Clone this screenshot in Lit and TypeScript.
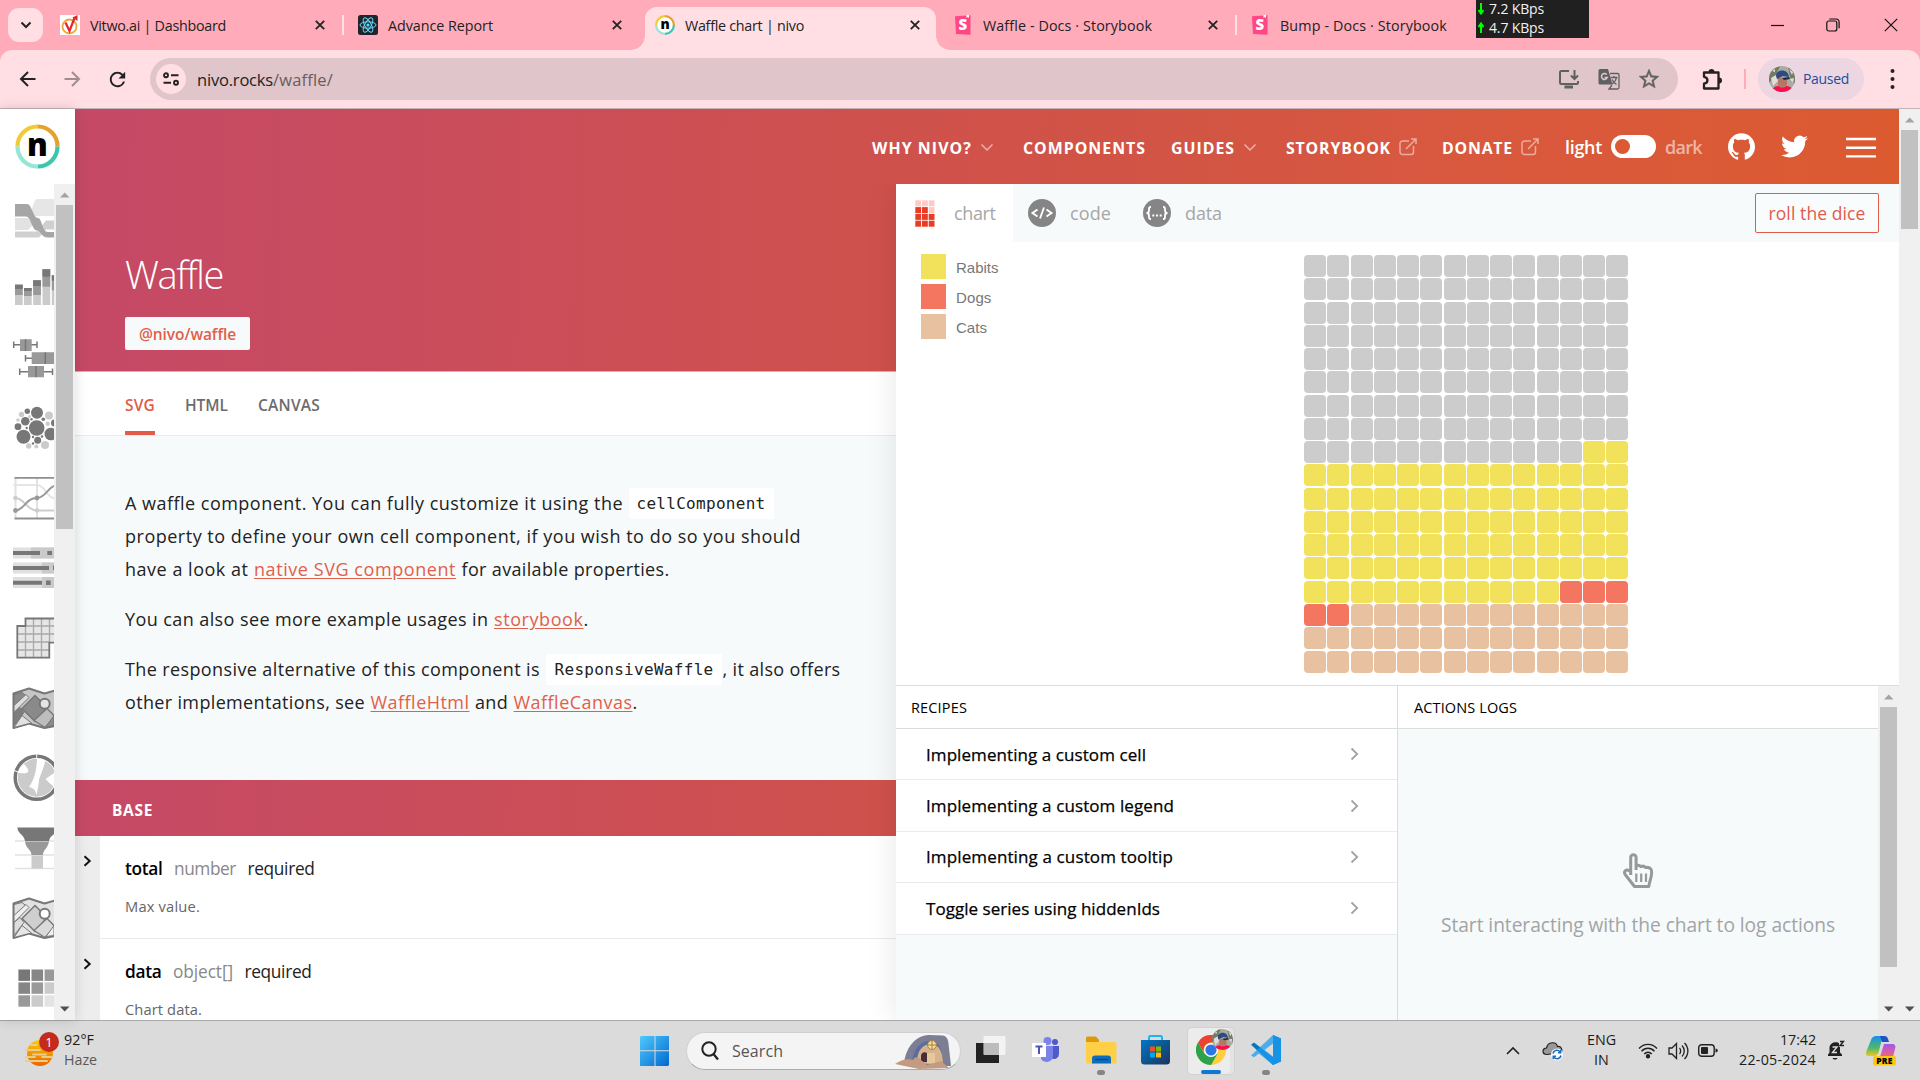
import { LitElement, html, svg, css } from "lit";
import { customElement, property } from "lit/decorators.js";

/** Text run that is tracked to occupy an exact advance width. */
@customElement("fit-text")
class FitText extends LitElement {
  @property({ type: Number }) w = 0;
  static styles = css`:host{display:inline-block;white-space:nowrap;flex:none}`;
  render() { return html`<slot></slot>`; }
  firstUpdated() {
    const n = (this.textContent || "").length;
    const natural = this.getBoundingClientRect().width;
    if (this.w && n) {
      this.style.letterSpacing = `${(this.w - natural) / n}px`;
      this.style.width = `${this.w}px`;
    }
  }
}

const ft = (text: string, w: number, cls = "") => html`<fit-text class=${cls} .w=${w}>${text}</fit-text>`;

/** Classic scrollbar with arrows. */
@customElement("scroll-bar")
class ScrollBar extends LitElement {
  @property({ type: Number }) thumb = 100;
  static styles = css`
    :host{display:flex;flex-direction:column;align-items:center;width:21px;flex:none;background:#f0f0f0}
    .t{width:17px;background:#c1c1c1}
    .sp{flex:1}
    svg{display:block;flex:none}
  `;
  render() {
    return html`
      <svg width="21" height="21"><path d="M6 13.5h9.5L10.7 8.5z" fill="#a3a3a3"/></svg>
      <div class="t" style="height:${this.thumb}px"></div><div class="sp"></div>
      <svg width="21" height="21"><path d="M6 7.5h9.5l-4.8 5z" fill="#505050"/></svg>`;
  }
}

const closeX = html`<svg class="x" width="12" height="12" viewBox="0 0 12 12"><path d="M1.8 1.8l8.4 8.4M10.2 1.8l-8.4 8.4" stroke="#222" stroke-width="1.8"/></svg>`;

const nivoRing = (s: number, w: number) => html`<svg width=${s} height=${s} viewBox="0 0 45 45">
  <circle cx="22.5" cy="22.5" r="20" fill="#fff"/>
  <g fill="none" stroke-width=${w}>
    <path d="M2.5 22.5a20 20 0 0 1 20-20" stroke="#f0cb35"/><path d="M22.5 2.5a20 20 0 0 1 20 20" stroke="#e6a12c"/>
    <path d="M42.500 22.5a20 20 0 0 1-20 20" stroke="#3cc7ac"/><path d="M22.500 42.5a20 20 0 0 1-20-20" stroke="#97e5d6"/>
  </g>
  <text x="22.500" y="31.500" text-anchor="middle" font-family="Open Sans, sans-serif" font-weight="800" font-size="31">n</text></svg>`;

const storybook = html`<svg width="20" height="20" viewBox="0 0 20 20"><path d="M2 1.200L17.500.2v19.500L3 19z" fill="#ff4785"/><path d="M13.500 0l2.500 0v3l-1.200-.9-1.300 1z" fill="#fff"/><text x="9.900" y="15.300" text-anchor="middle" font-family="Open Sans, sans-serif" font-weight="800" font-size="15" fill="#fff">S</text></svg>`;

const avatar = (s: number) => html`<svg width=${s} height=${s} viewBox="0 0 26 26"><defs><clipPath id="av"><circle cx="13" cy="13" r="13"/></clipPath></defs>
  <g clip-path="url(#av)"><rect width="26" height="26" fill="#a9aaa2"/><path d="M0 4l6-4h5L7 9l-7 8zM19 0l7 7v12l-5-8z" fill="#6f7d63"/><path d="M2 12l5-3 2 6-5 5zM20 3l4 3-1 3zM3 5l3-2v3zM21 13l4-1-1 5z" fill="#e2dcd8"/>
  <path d="M9 12h9v7l-4 3-5-3z" fill="#b47763"/><path d="M7 10c0-7 12-8 13 1l-6-1-6 3z" fill="#2c4b82"/><path d="M13 12l7-1 1 2-6 1z" fill="#202a44"/><path d="M3 26c0-5 4-6 7-6 2 2 5 2 7 0 4 0 7 2 7 6z" fill="#fa0f4b"/></g></svg>`;

const down = html`<svg width="14" height="9" viewBox="0 0 14 9"><path d="M1.500 1.500L7 7l5.500-5.500" fill="none" stroke="#fff" stroke-opacity=".55" stroke-width="1.500"/></svg>`;
const ext = html`<svg width="18" height="18" viewBox="0 0 18 18"><path d="M10 3H3.500A2.500 2.500 0 0 0 1 5.500V14a2.500 2.500 0 0 0 2.500 2.500H12a2.500 2.500 0 0 0 2.500-2.500V8M12 1h5v5M17 1L7 11" fill="none" stroke="#fff" stroke-opacity=".5" stroke-width="1.500"/></svg>`;
const next = html`<svg width="9" height="14" viewBox="0 0 9 14"><path d="M1.500 1.500L7.200 7l-5.700 5.500" fill="none" stroke="#a3a3a3" stroke-width="1.800"/></svg>`;
const expand = html`<svg width="9" height="12" viewBox="0 0 9 12"><path d="M1.500 1.200L6.700 6l-5.200 4.800" fill="none" stroke="#111" stroke-width="2"/></svg>`;

const mapBase = (y: number, dark: boolean) => svg`<g transform="translate(0 ${y})" stroke="#777" stroke-linejoin="round">
  <path d="M13.500 5L29 0l15.500 5L60 .5v36L44.500 39.500 29 35l-15.500 4.500z" fill=${dark ? "#c6c6c6" : "#e2e2e2"} stroke-width="2"/>
  <path d="M22 20L35 7l12 12-12 14z" fill=${dark ? "#8a8a8a" : "#cfcfcf"} stroke-width="1.500"/>
  <path d="M14 6l8-2 6 5-14 14z" fill=${dark ? "#8a8a8a" : "#dedede"} stroke-width="1"/>
  <path d="M14 17L26 6l3 3-15 15z" fill=${dark ? "#ddd" : "#eee"} stroke-width="1"/>
  <path d="M14 39l8-12 10 8-3 0z" fill=${dark ? "#e2e2e2" : "#e6e6e6"} stroke-width="1"/>
  <path d="M14 24l6-5 4 5-10 13z" fill=${dark ? "#7d7d7d" : "#ddd"} stroke-width="1"/>
  <path d="M34 32l13-12 8 8-10 11z" fill=${dark ? "#bdbdbd" : "#dadada"} stroke-width="1.300"/>
  <path d="M46 38l8-11v10z" fill=${dark ? "#8a8a8a" : "#eee"} stroke-width="1"/>
  <circle cx="44.700" cy="15.200" r="5" fill=${dark ? "#e5e5e5" : "#fff"} stroke-width="2"/></g>`;

const bar = (x: number, a: number, b: number, c: number) => svg`<rect x=${x} y=${a} width="7.700" height=${305 - a} fill="#cbcbcb"/><rect x=${x} y=${a} width="7.700" height=${c - a} fill="#999"/><rect x=${x} y=${a} width="7.700" height=${b - a} fill="#777"/>`;
const dots = (list: number[][], f: string) => list.map(([x, y, r]) => svg`<circle cx=${x} cy=${y} r=${r} fill=${f}/>`);

const chartIcons = [
  svg`<path d="M28 216c4-1 5-17 9-17h20v17z" fill="#e6e6e6"/><path d="M15 218h13l6 6-6 6H15z" fill="#e2e2e2"/><path d="M15 231.500h22l9-11h10v9H46l-7 8H15z" fill="#d0d0d0"/><path d="M15 204h12c5 0 6 14 11 14 4 0 4 14 10 14h8v5.500h-8c-7 0-7-7-11-7-5 0-6-14-11-14H15z" fill="#a6a6a6"/>`,
  svg`${bar(15, 284.7, 289, 295)}${bar(24, 288, 291, 296)}${bar(33.2, 280.3, 286, 295)}${bar(42.5, 269.3, 276.7, 286.7)}${bar(51.8, 275.3, 280.7, 290.3)}`,
  svg`<g stroke="#777" stroke-width="1.500" fill="#999"><path d="M13.500 344.700H37M13.700 341.500v6.500M37 341.500v6.500M25.500 358.300H40M25.500 355v6.500M19.700 371.700h33M19.700 368.500v6.500M52.500 368.500v6.500"/></g><path d="M20 339.300h11.700v11.700H20zM31.700 352.300H54V364H31.700zM28 366h16v11.300H28z" fill="#999"/><path d="M25.500 339.300V351M45.300 352.300V364M36 366v11.300" stroke="#777" stroke-width="1.500"/>`,
  svg`${dots([[49, 415.500, 4], [45, 445, 4], [21.500, 414.500, 2.700], [28.700, 446, 2.700], [36.300, 446.500, 2], [47.700, 423.700, 2.200], [18, 420, 1.800], [29.500, 416.500, 1.500]], "#cbcbcb")}${dots([[36.700, 428, 7.800], [37, 412.700, 6], [23.500, 436.700, 7], [50.800, 434, 6.300], [25.300, 421.300, 4.300], [18, 426.700, 3.400], [27.300, 411.300, 2.700], [37.700, 440.300, 3.500], [54.500, 423, 3.500], [43.300, 419.300, 1.800], [31.500, 419.300, 1.200], [26.700, 428, 1.200], [33, 437, 1.200], [42, 436.500, 1.200], [33, 443.500, 1.200]], "#777")}`,
  svg`<g fill="none" stroke-width="2"><path d="M15.500 478v40M37 478v40" stroke="#e2e2e2"/><path d="M13.500 485H37c8 0 9 12 17 13" stroke="#e5e5e5"/><path d="M13.500 498h2c9 0 11 12.500 21.500 12.500h17" stroke="#cdcdcd"/><path d="M15 510.500c10 0 10-12.500 22-12.500 8 0 10-9 17-12" stroke="#999"/><path d="M14.500 477.800H54M14.500 518.500H54" stroke="#8f8f8f" stroke-width="1.800"/></g>${dots([[15.500, 510.500, 2.400], [37, 498, 2.400]], "#999")}${dots([[15.500, 498, 2.200], [37, 510.500, 2.200]], "#cdcdcd")}`,
  svg`<path d="M13 547.500h41v11H13zM13 562.500h41v11H13zM13 577h41v11H13z" fill="#e0e0e0"/><path d="M31 547.500h23v11H31zM42 562.500h12v11H42zM42 577h12v11H42z" fill="#cacaca"/><path d="M13 551h27v4H13zM47.300 551h4.700v4h-4.700zM13 566h36v4H13zM13 580.700h29v4H13zM46 580.500h4.700v4.500H46zM53 565.500h2v4.500h-2z" fill="#777"/>`,
  svg`<path d="M25.500 618.500H60v24H49.300v15.200h-32V626h8.200z" fill="#e6e6e6"/><path d="M25.500 626v31M33.500 619v38M41.500 619v38M49.500 619v24M26 626h28M18 634h36M18 642h31M18 650h31" stroke="#a8a8a8" stroke-width="1.300"/><path d="M60 618.500H25.500v7.500h-8.200v31.700h32v-15H60" fill="none" stroke="#777" stroke-width="1.800"/>`,
  mapBase(688.5, true),
  svg`<circle cx="36.700" cy="777.700" r="19" fill="#cbcbcb"/><path d="M37 757l8.500 1.500c-1.500 11-6 17-6.500 22.500-1 7-1.500 9-2.500 14-1-5-3-7-7.500-8 6-8 8-20 8-30zM17 771l7-7c6 7 8 11-9 8.500zM45.500 779l8.500-6v14c-3-3-5-4-8.500-8z" fill="#fff"/><circle cx="36.700" cy="777.700" r="21.500" fill="none" stroke="#777" stroke-width="3.500"/><path d="M36.700 754v5M13 770l5 2" stroke="#fff"/>`,
  svg`<path d="M15 841h40M15 855h40M15 868.500h40" stroke="#e2e2e2" stroke-width="1.500"/><path d="M17.300 827.500H58c-1 7-8 7-9 13.500H25c-1-6.500-7-7-7.700-13.500z" fill="#777"/><path d="M25 841.500h24c-1 7-6 8-6 13.500H31.500c0-5.500-6-6.500-6.500-13.500z" fill="#999"/><path d="M31.500 855.500H43v13H31.500z" fill="#cbcbcb"/>`,
  mapBase(898.5, false),
  svg`${["#777", "#868686", "#999", "#868686", "#999", "#cbcbcb", "#999", "#cbcbcb", "#e3e3e3"].map((f, i) => svg`<rect x=${18.400 + (i % 3) * 13.100} y=${969.500 + Math.floor(i / 3) * 12.900} width="11.600" height="11.400" fill=${f}/>`)}`,
];

const waffle = Array.from({ length: 252 }, (_, i) => (i < 124 ? "e" : i < 207 ? "y" : i < 212 ? "r" : "c"));

@customElement("app-root")
class AppRoot extends LitElement {
  static styles = css`
    :host{display:flex;flex-direction:column;width:1920px;height:1080px;overflow:hidden;position:relative;font-family:"Open Sans","Noto Sans",sans-serif;background:#ffabba;color:#222}
    *{box-sizing:border-box}
    svg{display:block;flex:none}
    /* browser tabs */
    .strip{height:50px;flex:none;display:flex;padding-left:8px;font-size:14.300px}
    .search-tabs{width:35px;height:34px;margin-top:8px;margin-right:5px;border-radius:11px;background:#ffdee4;display:grid;place-items:center}
    .tab{height:50px;display:flex;align-items:center;gap:10px;position:relative}
    .tab svg:first-child{width:20px}
    .x{margin-left:auto}
    .t1{width:296px;padding:0 18px 0 12px}
    .t2{width:301px;padding:0 22px 0 14px}
    .t3{width:291px;height:43px;margin-top:7px;padding:0 15px 7px 10px;background:#ffdee4;border-radius:12px 12px 0 0}
    .t3::before,.t3::after{content:"";position:absolute;bottom:0;width:14px;height:14px}
    .t3::before{left:-14px;background:radial-gradient(circle at 0 0,transparent 13.5px,#ffdee4 14px)}
    .t3::after{right:-14px;background:radial-gradient(circle at 100% 0,transparent 13.5px,#ffdee4 14px)}
    .t4{width:301px;padding:0 18px 0 17px}
    .t5{width:239px;padding:0 0 0 13px}
    .sep::before{content:"";position:absolute;right:0;top:15px;width:2px;height:20px;background:#ffdee4}
    .win{margin-left:auto;padding-right:22px;display:flex;align-items:center}
    .win svg:nth-child(2){margin:0 44px 0 41px}
    .net{position:absolute;left:1476px;top:0;width:113px;height:38px;background:#202020;color:#f2f2f2;font-size:14px;line-height:19px}
    .net div{display:flex;align-items:center;gap:5px;padding-left:2px;height:19px;margin-top:-1px}
    .net div+div{margin-top:0}
    /* toolbar */
    .bar{height:59px;flex:none;background:#ffdee4;border-radius:12px 12px 0 0;border-bottom:1px solid #c3b3b7;display:flex;align-items:center;padding-left:18px}
    .bar svg.fw{margin:0 24px 0 24px}
    .omni{margin-left:21px;width:1528px;height:42px;border-radius:21px;background:#e0c5cb;display:flex;align-items:center;padding:0 18px 0 6px;font-size:16.500px}
    .info{width:30px;height:30px;border-radius:50%;background:#ffdee4;display:grid;place-items:center;margin-right:11px}
    .path{color:#6a5c60}
    .omni .ic{margin-left:auto;display:flex;gap:18px;align-items:center}
    .puz{margin-left:23px}
    .vs{width:2px;height:20px;background:#ffabba;margin:0 12px 0 20px}
    .paused{width:106px;height:42px;border-radius:21px;background:#ecd6e2;display:flex;align-items:center;gap:8px;padding:0 0 1px 11px;color:#1f4d9c;font-size:14px;font-weight:500}
    .dots{margin-left:26px}
    /* page */
    .page{height:911px;flex:none;display:flex;background:#fff}
    .side{width:75px;flex:none;display:flex;flex-direction:column;background:#fff;box-shadow:0 0 12px rgba(0,0,0,.15);z-index:2}
    .logo{height:75px;padding:15px 0 0 15px;flex:none}
    .sidebody{flex:1;display:flex;min-height:0}
    .icons{width:54px;overflow:hidden}
    .main{width:1824px;flex:none;display:grid;grid-template-columns:821px 1003px;grid-template-rows:75px 836px}
    .grad{background:linear-gradient(91deg,#c54966 75px,#ca4d5a 500px,#cd4f52 720px,#cf514c 900px,#d35542 1250px,#d85840 1420px,#dc5a30 1899px) fixed}
    .nav{grid-column:1/3;display:flex;align-items:center;padding:3px 0 0 797px;color:#fff;font-weight:700;font-size:15.900px}
    .nav>*{flex:none}
    .nav .d{margin-left:25px}
    .nav .s0{margin-left:29px}
    .nav .s1{margin-left:29px}
    .nav .e{margin:-2px 0 0 8px}
    .nav .l{margin-left:26px;font-size:18px;font-weight:600;margin-top:-3px}
    .tog{width:45px;height:23px;border-radius:12px;background:#fff;margin:-3px 9px 0 9px;padding:4px}
    .tog i{display:block;width:15px;height:15px;border-radius:50%;background:#db5a32}
    .nav .dk{font-size:18px;font-weight:600;opacity:.55;margin-top:-3px}
    .nav .gh{margin:-3px 0 0 26px}.nav .tw{margin:-3px 0 0 26px}.nav .hb{margin:-2px 0 0 38px}
    .left{display:flex;flex-direction:column;min-height:0;overflow:hidden}
    .hero{height:188px;flex:none;padding:63px 0 0 50px;border-bottom:1px solid #eba5a4}
    h1{margin:0;font-weight:300;font-size:38px;line-height:54px;height:54px;color:#fff}
    .pkg{width:125px;height:33px;border-radius:2px;background:#f6fafb;color:#e25f49;font-weight:600;font-size:15.500px;display:grid;place-items:center;margin-top:16px}
    .kinds{height:64px;flex:none;display:flex;gap:30px;padding-left:50px;border-bottom:1px solid #e8eced;font-size:15.500px;font-weight:600;color:#6c6c6c;line-height:67px}
    .kinds .on{color:#e25b49;border-bottom:4px solid #e25b49;height:63px}
    .desc{height:344px;flex:none;background:#f6fafb;padding:51px 0 0 50px;font-size:18px;color:#222}
    .ln{height:32.700px;display:flex;align-items:center;gap:5.500px}
    .tall{height:33px}
    .gapb{margin-bottom:18px}
    .gapb+.tall{margin-top:-1px}
    .u{color:#e25f49;text-decoration:underline;text-underline-offset:2px}
    .code{font-family:"DejaVu Sans Mono",monospace;font-size:16px;background:#fff;border-radius:2px;padding:1px 8px 0;height:31px;display:flex;align-items:center}
    .tall .code{margin-right:1px;padding-left:9px}
    .nog{margin-left:-5.500px}
    .base{height:56px;flex:none;color:#fff;font-weight:700;font-size:15.500px;display:flex;align-items:center;padding:3px 0 0 37px}
    .prop{height:103px;flex:none;display:flex;background:#fff}
    .gut{width:25px;background:#ededed;padding:19px 0 0 8px}
    .pb{flex:1;padding:20px 0 0 25px;border-bottom:1px solid #e9eced;font-size:17.300px;color:#222}
    .p1{display:flex;height:24px;align-items:center;gap:11.500px}
    .p1 b{font-weight:600;color:#000}.p1 .ty{color:#888}
    .p2{margin-top:14px;height:24px;display:flex;align-items:center;font-size:14.700px;color:#666}
    .right{display:flex;flex-direction:column;background:#fff;box-shadow:0 0 30px rgba(0,0,0,.1);clip-path:inset(0 0 0 -40px);min-height:0}
    .ctabs{height:58px;flex:none;background:#f6fafb;display:flex;font-size:18px;color:#a6a6a6}
    .ct{display:flex;align-items:center}
    .c-a{width:117px;background:#fff;padding-left:19px;gap:19px}
    .c-b{padding-left:15px;gap:14px;width:115px}
    .c-c{padding-left:15px;gap:14px}
    .roll{margin:9px 20px 0 auto;width:124px;height:40px;border:1px solid #e25b49;border-radius:2px;color:#e25b49;display:grid;place-items:center;font-size:17.500px;background:#f9fcfc;font-weight:500}
    .chart{height:443px;flex:none;display:flex;padding:12px 0 0 25px}
    .leg{width:383px;display:flex;flex-direction:column;gap:4.500px;font-family:"Liberation Sans",sans-serif;font-size:15px;color:#777}
    .leg div{display:flex;align-items:center;gap:10px;height:25.500px}
    .leg i{width:25px;height:25px}
    .leg fit-text{margin-top:1.500px}
    .wf{display:grid;grid-template-columns:repeat(14,22px);grid-auto-rows:22px;gap:1.280px;padding-top:1px}
    .wf i{border-radius:4px}
    .wf .e{background:#ccc}.y{background:#f1e15b}.r{background:#f47560}.c{background:#e8c1a0}
    .low{flex:1;display:flex;border-top:1px solid #dcdcdc;background:#f6fafb;min-height:0}
    .rec{width:502px;border-right:1px solid #dcdcdc}
    .act{flex:1;display:flex;flex-direction:column}
    .hd{height:43px;flex:none;background:#fff;border-bottom:1px solid #dcdcdc;display:flex;align-items:center;padding-left:15px;font-size:14.500px;font-weight:500;color:#000}
    .act .hd{padding-left:16px}
    .ri{height:51.400px;background:#fff;border-bottom:1px solid #ebebeb;display:flex;align-items:center;justify-content:space-between;padding:0 38px 0 30px;font-size:17px;font-weight:500;-webkit-text-stroke:.25px #000;color:#000}
    .empty{flex:1;display:flex;flex-direction:column;align-items:center;padding:124px 0 0 0;gap:22px;font-size:19.200px;color:#a2a4a4}
    /* taskbar */
    .task{height:60px;flex:none;background:#dbdbdb;border-top:1px solid #a9a9a9;display:grid;grid-template-columns:64px 576px 46px 290px 56px 54px 55px 46px 64px 255px 36px 45px 51px 30px 30px 39px 79px 11px 39px 40px;align-items:center;font-size:14.300px;color:#1c1c1c}
    .wx{padding:0 0 2px 25px}
    .two{line-height:20px;padding-bottom:2px}
    .two div{height:20px}
    .mut{color:#5a5a5a}
    .find{width:275px;height:38px;border-radius:19px;background:#f4f4f4;border:1px solid #cfcfcf;border-bottom-color:#aaa;display:flex;align-items:center;padding-left:14px;font-size:16px;color:#555;overflow:hidden}
    .find fit-text{margin-left:13px}
    .find .art{margin:0 8px 0 auto}
    .app{position:relative;width:34px;height:59px;display:grid;align-items:center}
    .app svg,.cr>svg{margin-top:-1px}
    .run::after{content:"";position:absolute;left:11px;top:49px;width:8px;height:5px;border-radius:3px;background:#858585}
    .cr{width:48px;height:48px;background:#ececec;border:1px solid #d2d2d2;border-radius:5px;box-shadow:inset -4px 0 0 #e3e3e3;position:relative;padding:8px 0 0 8px}
    .cr .av{position:absolute;left:24px;top:1px}
    .cr::after{content:"";position:absolute;left:13px;bottom:0;width:20px;height:4px;border-radius:2px;background:#0f78d4}
    .ctr{display:flex;flex-direction:column;align-items:center;width:29px}
    .rt{display:flex;flex-direction:column;align-items:flex-end}
  `;

  private strip() {
    return html`<div class="strip">
      <div class="search-tabs"><svg width="12" height="8" viewBox="0 0 12 8"><path d="M1.500 1.500L6 6l4.500-4.500" fill="none" stroke="#222" stroke-width="2"/></svg></div>
      <div class="tab t1 sep"><svg width="20" height="20" viewBox="0 0 20 20"><rect width="20" height="20" fill="#fff"/><circle cx="9.500" cy="11.500" r="7" fill="none" stroke="#f0a63c" stroke-width="1.800"/><path d="M5.500 7.500L9.500 16 14.500 3" fill="none" stroke="#e3262c" stroke-width="2.200"/><path d="M12.300 2.500L17.500 0v6z" fill="#e3262c"/></svg>${ft("Vitwo.ai | Dashboard", 136)}${closeX}</div>
      <div class="tab t2"><svg width="20" height="20" viewBox="0 0 20 20"><rect width="20" height="20" rx="2.500" fill="#20232a"/><g fill="none" stroke="#61dafb" stroke-width="1"><ellipse cx="10" cy="10" rx="8" ry="3.200"/><ellipse cx="10" cy="10" rx="8" ry="3.200" transform="rotate(60 10 10)"/><ellipse cx="10" cy="10" rx="8" ry="3.200" transform="rotate(120 10 10)"/></g><circle cx="10" cy="10" r="1.600" fill="#61dafb"/></svg>${ft("Advance Report", 105)}${closeX}</div>
      <div class="tab t3">${nivoRing(20, 5)}${ft("Waffle chart | nivo", 119)}${closeX}</div>
      <div class="tab t4 sep">${storybook}${ft("Waffle - Docs · Storybook", 169)}${closeX}</div>
      <div class="tab t5">${storybook}${ft("Bump - Docs · Storybook", 167)}</div>
      <div class="win">
        <svg width="14" height="14"><path d="M0 7.500h13" stroke="#111" stroke-width="1.200"/></svg>
        <svg width="14" height="14" viewBox="0 0 14 14" fill="none" stroke="#111" stroke-width="1.200"><rect x=".8" y="3" width="10" height="10" rx="2"/><path d="M3.300 1h6.500a3.300 3.300 0 0 1 3.300 3.300v6"/></svg>
        <svg width="14" height="14" viewBox="0 0 14 14"><path d="M.8.8l12.400 12.400M13.200.8L.8 13.200" stroke="#111" stroke-width="1.200"/></svg>
      </div>
      <div class="net"><div><svg width="6" height="12" viewBox="0 0 6 12"><path d="M3 0v9M.5 7L3 10.500 5.500 7" fill="none" stroke="#0f0" stroke-width="2"/></svg>${ft("7.2 KBps", 55)}</div><div><svg width="6" height="12" viewBox="0 0 6 12"><path d="M3 11V3M.5 5L3 1.500 5.500 5" fill="none" stroke="#0f0" stroke-width="2"/></svg>${ft("4.7 KBps", 55)}</div></div>
    </div>`;
  }

  private bar() {
    return html`<div class="bar">
      <svg width="20" height="20" viewBox="0 0 20 20"><path d="M17.500 10H3M10 3l-7 7 7 7" fill="none" stroke="#222" stroke-width="2"/></svg>
      <svg class="fw" width="20" height="20" viewBox="0 0 20 20"><path d="M2.500 10H17M10 3l7 7-7 7" fill="none" stroke="#a08d92" stroke-width="2"/></svg>
      <svg width="23" height="23" viewBox="0 0 24 24"><path fill="#222" d="M17.650 6.350A7.958 7.958 0 0012 4c-4.420 0-7.990 3.580-7.990 8s3.570 8 7.990 8c3.730 0 6.840-2.550 7.730-6h-2.080A5.990 5.990 0 0112 18c-3.310 0-6-2.690-6-6s2.690-6 6-6c1.660 0 3.140.69 4.220 1.780L13 11h7V4l-2.350 2.350z"/></svg>
      <div class="omni">
        <div class="info"><svg width="16" height="14" viewBox="0 0 16 14" fill="none" stroke="#222" stroke-width="1.900"><circle cx="3" cy="3.300" r="2"/><path d="M8 3.300h7.500M.5 10.700H8"/><circle cx="13" cy="10.700" r="2"/></svg></div>
        ${ft("nivo.rocks", 76)}${ft("/waffle/", 60, "path")}
        <div class="ic">
          <svg width="22" height="20" viewBox="0 0 22 20" fill="none" stroke="#5f6062" stroke-width="2"><path d="M11 2H3.500A1.500 1.500 0 0 0 2 3.500v10A1.500 1.500 0 0 0 3.500 15h15a1.500 1.500 0 0 0 1.500-1.500V12M16.500 1v8M13 6.500l3.500 3.500L20 6.500"/><path d="M6.500 18h8.500" stroke-width="3"/></svg>
          <svg width="22" height="22" viewBox="0 0 22 22"><path d="M2 1h8l4.500 15.500H2a1.500 1.500 0 0 1-1.500-1.500V2.500A1.500 1.500 0 0 1 2 1z" fill="#5f6062"/><path d="M8.800 6.500a3 3 0 1 0 .5 3H6.500" fill="none" stroke="#e0c5cb" stroke-width="1.500"/><path d="M12 5.500h7.500A1.500 1.500 0 0 1 21 7v12.500a1.500 1.500 0 0 1-1.500 1.500H11l3-4M12.500 9.500h7M16 8v1.500M18.500 9.500c-.5 3-2.500 5-4.500 6.500M14 11.500c1 2 3 4 4.500 5" fill="none" stroke="#5f6062" stroke-width="1.300"/></svg>
          <svg width="22" height="22" viewBox="1 1 22 22"><path fill="#5f6062" stroke="#5f6062" stroke-width=".4" d="M22 9.240l-7.190-.62L12 2 9.190 8.630 2 9.240l5.460 4.730L5.820 21 12 17.270 18.180 21l-1.630-7.030L22 9.240zM12 15.400l-3.760 2.270 1-4.280-3.320-2.880 4.380-.38L12 6.100l1.710 4.040 4.380.38-3.320 2.880 1 4.280L12 15.400z"/></svg>
        </div>
      </div>
      <svg class="puz" width="23" height="23" viewBox="0 0 23 23"><path d="M3 4.500h14.500v16H3v-4.800c4.600-.5 4.600-6.400 0-6.900z" fill="none" stroke="#222" stroke-width="2.300" stroke-linejoin="round"/><path d="M7.500 4a3 3 0 0 1 6 0zM18 9.500a3 3 0 0 1 0 6z" fill="#222"/></svg>
      <div class="vs"></div>
      <div class="paused">${avatar(26)}${ft("Paused", 46)}</div>
      <svg class="dots" width="5" height="22" viewBox="0 0 5 22" fill="#222"><circle cx="2.500" cy="3" r="2"/><circle cx="2.500" cy="11" r="2"/><circle cx="2.500" cy="19" r="2"/></svg>
    </div>`;
  }

  private prop(name: string, nw: number, type: string, tw: number, desc: string, dw: number) {
    return html`<div class="prop"><div class="gut">${expand}</div><div class="pb"><div class="p1"><b>${ft(name, nw)}</b>${ft(type, tw, "ty")}${ft("required", 67)}</div><div class="p2">${ft(desc, dw)}</div></div></div>`;
  }

  private nav() {
    return html`<div class="nav grad">
      ${ft("WHY NIVO?", 100)}<span class="e">${down}</span>
      ${ft("COMPONENTS", 123, "s0")}${ft("GUIDES", 64, "d")}<span class="e">${down}</span>
      ${ft("STORYBOOK", 105, "s1")}<span class="e">${ext}</span>
      ${ft("DONATE", 71, "d")}<span class="e">${ext}</span>
      ${ft("light", 37, "l")}<div class="tog"><i></i></div>${ft("dark", 37, "dk")}
      <svg class="gh" width="27" height="27" viewBox="0 0 24 24"><path fill="#fff" d="M12 .297c-6.630 0-12 5.373-12 12 0 5.303 3.438 9.800 8.205 11.385.6.113.82-.258.82-.577 0-.285-.01-1.040-.015-2.040-3.338.724-4.042-1.610-4.042-1.610C4.422 18.070 3.633 17.700 3.633 17.700c-1.087-.744.084-.729.084-.729 1.205.084 1.838 1.236 1.838 1.236 1.070 1.835 2.809 1.305 3.495.998.108-.776.417-1.305.76-1.605-2.665-.3-5.466-1.332-5.466-5.930 0-1.310.465-2.380 1.235-3.220-.135-.303-.54-1.523.105-3.176 0 0 1.005-.322 3.300 1.230.96-.267 1.980-.399 3-.405 1.020.006 2.040.138 3 .405 2.280-1.552 3.285-1.230 3.285-1.230.645 1.653.24 2.873.12 3.176.765.84 1.230 1.910 1.230 3.220 0 4.610-2.805 5.625-5.475 5.920.42.36.81 1.096.81 2.220 0 1.606-.015 2.896-.015 3.286 0 .315.21.69.825.57C20.565 22.092 24 17.592 24 12.297c0-6.627-5.373-12-12-12"/></svg>
      <svg class="tw" width="27" height="27" viewBox="0 0 24 24"><path fill="#fff" d="M23.953 4.570a10 10 0 01-2.825.775 4.958 4.958 0 002.163-2.723c-.951.555-2.005.959-3.127 1.184a4.920 4.920 0 00-8.384 4.482C7.690 8.095 4.067 6.130 1.640 3.162a4.822 4.822 0 00-.666 2.475c0 1.710.87 3.213 2.188 4.096a4.904 4.904 0 01-2.228-.616v.06a4.923 4.923 0 003.946 4.827 4.996 4.996 0 01-2.212.085 4.936 4.936 0 004.604 3.417 9.867 9.867 0 01-6.102 2.105c-.39 0-.779-.023-1.170-.067a13.995 13.995 0 007.557 2.209c9.053 0 13.998-7.496 13.998-13.985 0-.21 0-.42-.015-.63A9.935 9.935 0 0024 4.590z"/></svg>
      <svg class="hb" width="30" height="21" viewBox="0 0 30 21"><path d="M0 2h30M0 10.700h30M0 19.400h30" stroke="#fff" stroke-width="2.400"/></svg>
    </div>`;
  }

  private left() {
    return html`<div class="left">
      <div class="hero grad"><h1>${ft("Waffle", 98)}</h1><div class="pkg">${ft("@nivo/waffle", 97)}</div></div>
      <div class="kinds">${ft("SVG", 30, "on")}${ft("HTML", 43)}${ft("CANVAS", 62)}</div>
      <div class="desc">
        <div class="ln">${ft("A waffle component. You can fully customize it using the", 498)}<span class="code">${ft("cellComponent", 129)}</span></div>
        <div class="ln">${ft("property to define your own cell component, if you wish to do so you should", 676)}</div>
        <div class="ln gapb">${ft("have a look at", 123.5)}${ft("native SVG component", 202, "u")}${ft("for available properties.", 208)}</div>
        <div class="ln gapb">${ft("You can also see more example usages in", 363.5)}${ft("storybook", 89.5, "u")}<span class="nog">.</span></div>
        <div class="ln tall">${ft("The responsive alternative of this component is", 415)}<span class="code">${ft("ResponsiveWaffle", 159)}</span><span class="nog">${ft(", it also offers", 118)}</span></div>
        <div class="ln">${ft("other implementations, see", 240)}${ft("WaffleHtml", 99, "u")}${ft("and", 33)}${ft("WaffleCanvas", 119, "u")}<span class="nog">.</span></div>
      </div>
      <div class="base grad">${ft("BASE", 41)}</div>
      ${this.prop("total", 37.5, "number", 62, "Max value.", 75)}
      ${this.prop("data", 36.5, "object[]", 60, "Chart data.", 77)}
    </div>`;
  }

  private right() {
    return html`<div class="right">
      <div class="ctabs">
        <div class="ct c-a"><svg width="20" height="27" viewBox="0 0 20 27">${Array.from({ length: 12 }, (_, i) => svg`<rect x=${(i % 3) * 6.7 + .3} y=${Math.floor(i / 3) * 6.8 + .3} width="5.800" height="6" fill=${i < 3 || i === 5 ? "#ffc9c5" : "#ea3b24"}/>`)}</svg>${ft("chart", 41.5)}</div>
        <div class="ct c-b"><svg width="28" height="28" viewBox="0 0 28 28"><circle cx="14" cy="14" r="14" fill="#858585"/><path d="M9.500 10.500L4.500 14l5 3.500M18.500 10.500l5 3.500-5 3.500M16 8.500l-4 11" fill="none" stroke="#fff" stroke-width="1.900"/></svg>${ft("code", 41)}</div>
        <div class="ct c-c"><svg width="28" height="28" viewBox="0 0 28 28"><circle cx="14" cy="14" r="14" fill="#858585"/><path d="M8 8C5.500 8 6 9.500 6 11.500S5.500 14 3.500 14c2 0 2.500.5 2.500 2.500S5.500 20 8 20M20 8c2.500 0 2 1.500 2 3.500s.5 2.500 2.500 2.500c-2 0-2.500.5-2.500 2.500S22.500 20 20 20" fill="none" stroke="#fff" stroke-width="1.800"/><path d="M9.300 15.500h2v2h-2zM13 15.500h2v2h-2zM16.700 15.500h2v2h-2z" fill="#fff"/></svg>${ft("data", 37)}</div>
        <div class="roll">${ft("roll the dice", 97)}</div>
      </div>
      <div class="chart">
        <div class="leg"><div><i class="y"></i>${ft("Rabits", 42.5)}</div><div><i class="r"></i>${ft("Dogs", 35.5)}</div><div><i class="c"></i>${ft("Cats", 31)}</div></div>
        <div class="wf">${waffle.map((k) => html`<i class=${k}></i>`)}</div>
      </div>
      <div class="low">
        <div class="rec"><div class="hd">${ft("RECIPES", 56)}</div>
          ${([["Implementing a custom cell", 220], ["Implementing a custom legend", 248], ["Implementing a custom tooltip", 247], ["Toggle series using hiddenIds", 234]] as [string, number][]).map(([t, w]) => html`<div class="ri">${ft(t, w)}${next}</div>`)}
        </div>
        <div class="act"><div class="hd">${ft("ACTIONS LOGS", 103)}</div>
          <div class="empty"><svg width="31" height="36" viewBox="0 0 31 36" fill="none" stroke="#98989a" stroke-width="3" stroke-linejoin="round"><path d="M7.700 22V4.500a2.700 2.700 0 0 1 5.400 0V17M13.100 13q2.500-1.800 4.800.6 2.800-1.300 4.700 1 3.200-.8 5 1.200 1.200 1.200 1 4.200c-.2 6.500-2.400 8-2.700 13.500H11.500L2.500 22c-2.500-3.500 1-7 4-3.800"/><path d="M13.300 20.500v8.500M18.200 20.500v8.500M23 20.500v8.500" stroke-width="2.200"/></svg>${ft("Start interacting with the chart to log actions", 394)}</div>
        </div>
        <scroll-bar .thumb=${260}></scroll-bar>
      </div>
    </div>`;
  }

  private task() {
    return html`<div class="task">
      <div class="wx"><svg width="35" height="38" viewBox="25 1027 35 38"><defs><linearGradient id="sun" x2="0" y2="1"><stop stop-color="#ffc800"/><stop offset="1" stop-color="#ea6400"/></linearGradient></defs><circle cx="40" cy="1049" r="13" fill="url(#sun)"/><path d="M26 1046h14M33 1050.500h13M26 1053h9M42 1053h10M25 1057h22M31 1041h6" stroke="#e8cd8c" stroke-width="1.800" stroke-linecap="round"/><circle cx="49" cy="1038" r="10" fill="#c42b1c"/><text x="49" y="1043" font-size="13" font-family="Open Sans, sans-serif" fill="#fff" text-anchor="middle">1</text></svg></div>
      <div class="two"><div>${ft("92°F", 30)}</div><div class="mut">${ft("Haze", 33)}</div></div>
      <svg width="30" height="30" viewBox="0 0 30 30"><defs><linearGradient id="wn" x2="1" y2="1"><stop stop-color="#4fcaff"/><stop offset="1" stop-color="#0068cf"/></linearGradient></defs><path d="M1 0h13.500v14.300H0V1zM15.500 0H29v14.300H15.500zM0 15.300h14.500V30H0zM15.500 15.300H29V29l-1 1H15.500z" fill="url(#wn)"/></svg>
      <div class="find"><svg width="18" height="20" viewBox="0 0 18 20"><circle cx="8" cy="8" r="6.700" fill="none" stroke="#222" stroke-width="2"/><path d="M12.500 13l4.500 5.500" stroke="#222" stroke-width="2.300"/></svg>${ft("Search", 51)}
        <svg class="art" width="57" height="36" viewBox="0 0 57 36"><path d="M9 31C10 16 20 2 34 2l14 .5c4 1 5 4 5.500 8L56 33H20z" fill="#7c7f94"/><path d="M17 30c1-14 8-22 18-22 8 0 12 6 13 22z" fill="#5b6da0"/><path d="M22 30c0-13 6-19 14-19s12 8 12 21z" fill="#d8b48c"/><path d="M26 29v-6c0-5 7-5 8 0v6z" fill="#4b2a3a"/><circle cx="37" cy="12" r="4.500" fill="#f3dca0" stroke="#a88040"/><path d="M37 8v8M33 12h8" stroke="#a88040"/><path d="M0 31c6-4 12-6 18-4 2-4 6-3 8 0l6 5 14-4 8 7-30 1z" fill="#c39a82"/><path d="M32 20h8v10h-8z" fill="#e7c89c"/></svg></div>
      <div class="app"><svg width="31" height="30" viewBox="0 0 31 30"><path d="M0 8h23v20H0z" fill="#222"/><rect x="7.500" y="1" width="22" height="19" rx="1" fill="#f6f6f6" fill-opacity=".88"/><path d="M8 8h15v12H8z" fill="#bcbcbc"/></svg></div>
      <div class="app"><svg width="28" height="28" viewBox="0 0 28 28"><circle cx="23" cy="6" r="3" fill="#5059c9"/><circle cx="15.500" cy="5" r="4" fill="#7b83eb"/><path d="M19 10h8v8a5 5 0 0 1-8 4z" fill="#5059c9"/><path d="M9 10h12v10a6.500 6.500 0 0 1-12 3z" fill="#7b83eb"/><path d="M0 7h14v14H0z" fill="#fff"/><path d="M3.500 10.500h7M7 10.500V18" stroke="#4b53bc" stroke-width="2"/></svg></div>
      <div class="app run"><svg width="31" height="30" viewBox="0 0 31 30"><path d="M0 3a1.500 1.500 0 0 1 1.500-1.500H10L13 5v6H0z" fill="#dc9a0a"/><path d="M0 7h29l1.500 1.500V27a1.500 1.500 0 0 1-1.500 1.500H1.500A1.500 1.500 0 0 1 0 27z" fill="#ffcf48"/><path d="M6 28.500v-5a3 3 0 0 1 3-3h13a3 3 0 0 1 3 3v5z" fill="#0f6cbd"/><path d="M9 24.500h13" stroke="#0a4a8a" stroke-width="1.300"/></svg></div>
      <div class="app"><svg width="30" height="30" viewBox="0 0 30 30"><defs><linearGradient id="st" x2="1" y2="1"><stop stop-color="#0078c8"/><stop offset="1" stop-color="#1e335a"/></linearGradient></defs><path d="M8 7V2.500A1.500 1.500 0 0 1 9.500 1h10A1.500 1.500 0 0 1 21 2.500V7" fill="none" stroke="#1fb4f0" stroke-width="2"/><path d="M0 5h29v21a3.500 3.500 0 0 1-3.500 3.500h-22A3.500 3.500 0 0 1 0 26z" fill="url(#st)"/><path d="M9 11.500h5v5H9z" fill="#f25022"/><path d="M15 11.500h5v5h-5z" fill="#7fba00"/><path d="M9 17.500h5v5H9z" fill="#00a4ef"/><path d="M15 17.500h5v5h-5z" fill="#ffb900"/></svg></div>
      <div class="cr"><svg width="30" height="30" viewBox="0 0 30 30"><circle cx="15" cy="15" r="15" fill="#ffcd40"/><path d="M15 15l-6.500 3.700L2 7.500A15 15 0 0 0 15 30l6.500-11.300z" fill="#2ba24c"/><path d="M2 7.500A15 15 0 0 1 28 7.500H15a7.500 7.500 0 0 0-6.800 10.300z" fill="#ea4335"/><circle cx="15" cy="15" r="7" fill="#fff"/><circle cx="15" cy="15" r="5.600" fill="#2f75ea"/></svg><div class="av">${avatar(21)}</div></div>
      <div class="app run"><svg width="31" height="30" viewBox="0 0 31 30"><path d="M22 0l8 3.500v23L22 30 2 11.500 0 9.800l3-2.300L22 22z" fill="#0078c4"/><path d="M22 30L8 18.500 3 22.300 0 20.500 22 0l8 3.500V26.500z" fill="#1f9cf0" fill-opacity=".75"/><path d="M22 8.500v13L13.500 15z" fill="#dbdbdb"/></svg></div>
      <svg width="14" height="9" viewBox="0 0 14 9"><path d="M1 8l6-6 6 6" fill="none" stroke="#222" stroke-width="1.600"/></svg>
      <svg width="22" height="20" viewBox="0 0 22 20"><path d="M5 13.500C-.5 13.500 0 7 4.500 7 6 0 14.500.5 15.500 5.500c4-.5 5 3 4 6z" fill="#999" stroke="#222" stroke-width="1.200"/><circle cx="15" cy="13.500" r="6" fill="#fff"/><path d="M11 12.500a4 4 0 0 1 7.500-1M19 14.500a4 4 0 0 1-7.500 1M18.700 9v2.700H16M11.300 18v-2.700H14" fill="none" stroke="#1570c5" stroke-width="1.500"/></svg>
      <div class="two ctr"><div>${ft("ENG", 29)}</div><div>${ft("IN", 15)}</div></div>
      <svg width="20" height="16" viewBox="0 0 20 16" fill="none" stroke="#222" stroke-width="1.400"><path d="M1 5.500c5-5.500 13-5.500 18 0M3.500 8.200c3.700-4 9.300-4 13 0M6.200 11c2.200-2.300 5.400-2.300 7.600 0"/><circle cx="10" cy="13.300" r="1.500" fill="#222"/></svg>
      <svg width="21" height="18" viewBox="0 0 21 18" fill="none" stroke="#222" stroke-width="1.300"><path d="M1 6h3l4.500-4.500v15L4 12H1zM11.500 6c1.500 1.500 1.500 4.500 0 6M14 3.500c3 3 3 8 0 11M16.500 1c4.500 4.500 4.500 11.500 0 16"/></svg>
      <svg width="20" height="13" viewBox="0 0 20 13"><rect x=".7" y=".7" width="15.500" height="11.600" rx="3" fill="none" stroke="#222" stroke-width="1.400"/><rect x="3" y="3" width="7" height="7" rx="1" fill="#222"/><path d="M17.500 4.500c3 0 3 4 0 4z" fill="#222"/></svg>
      <div class="two rt"><div>${ft("17:42", 36)}</div><div>${ft("22-05-2024", 77)}</div></div><span></span>
      <svg width="18" height="21" viewBox="0 0 18 21"><path d="M1 14.500l1.500-2V8c0-6 8-7.500 10.500-4v8.500l2 2V16H1z" fill="#222"/><path d="M12 0h6v7h-6z" fill="#dbdbdb"/><path d="M5.500 18h5c-1 2-4 2-5 0z" fill="#222"/><path d="M5.500 7h4.500l-4.500 5.500H10" fill="none" stroke="#dbdbdb" stroke-width="1.400"/><path d="M13 1.500h3.500L13 5.500h4" fill="none" stroke="#222" stroke-width="1.400"/></svg>
      <svg width="30" height="30" viewBox="0 0 30 30"><defs><linearGradient id="ca" x2="0" y2="1"><stop stop-color="#1a8fe8"/><stop offset=".6" stop-color="#4fb86a"/><stop offset="1" stop-color="#f4c81e"/></linearGradient><linearGradient id="cb" x2="0" y2="1"><stop stop-color="#a557ea"/><stop offset="1" stop-color="#f2667a"/></linearGradient></defs><path d="M5 4c1-3 3-4 5-4h9c-3 2-4 7-5.500 13S11 20 8 20H2c-3-1-2-4-1-6z" fill="url(#ca)"/><path d="M14 0h5c2 0 3 2 4 6h-7z" fill="#1b55c8"/><path d="M18 8h8c3 0 4 2 3 5l-2 8H14z" fill="url(#cb)"/><rect x="7" y="20" width="23" height="9.500" rx="2" fill="#fdc712"/><text x="18.500" y="28" text-anchor="middle" font-family="Open Sans, sans-serif" font-weight="800" font-size="8.500" letter-spacing=".3">PRE</text></svg>
    </div>`;
  }

  render() {
    return html`${this.strip()}${this.bar()}
      <div class="page">
        <div class="side"><div class="logo">${nivoRing(45, 4.2)}</div>
          <div class="sidebody"><div class="icons">${chartIcons.map((g, k) => html`<svg width="54" height="70" viewBox="0 ${184 + 70 * k} 54 70">${g}</svg>`)}</div><scroll-bar .thumb=${324}></scroll-bar></div>
        </div>
        <div class="main">${this.nav()}${this.left()}${this.right()}</div>
        <scroll-bar .thumb=${99}></scroll-bar>
      </div>
      ${this.task()}`;
  }
}
